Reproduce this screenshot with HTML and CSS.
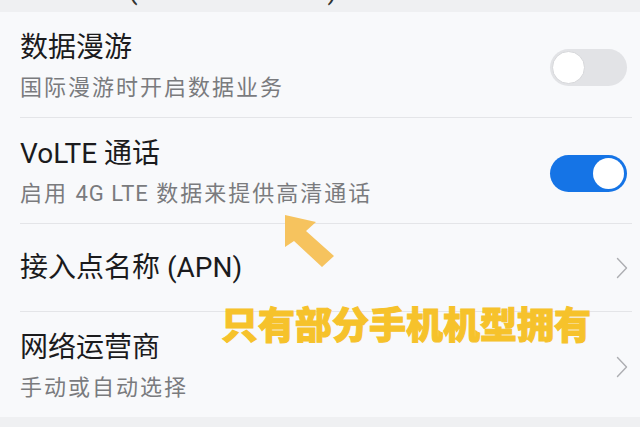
FILE: index.html
```html
<!DOCTYPE html>
<html lang="zh-CN">
<head>
<meta charset="utf-8">
<title>移动网络设置</title>
<link rel="stylesheet" href="styles.css">
</head>
<body>
<div class="screen">
  <div class="top-band">
    <span class="paren paren-l">(</span><span class="paren paren-r">)</span>
  </div>
  <div class="card">
    <div class="row row-two">
      <div class="texts">
        <div class="title">数据漫游</div>
        <div class="sub">国际漫游时开启数据业务</div>
      </div>
      <div class="switch switch-off"><span class="knob"></span></div>
    </div>
    <div class="row row-two">
      <div class="texts">
        <div class="title">VoLTE 通话</div>
        <div class="sub">启用 <span class="latin">4G LTE</span> 数据来提供高清通话</div>
      </div>
      <div class="switch switch-on"><span class="knob"></span></div>
    </div>
    <div class="row row-one">
      <div class="texts">
        <div class="title">接入点名称 (APN)</div>
      </div>
      <svg class="chevron" width="12" height="22" viewBox="0 0 12 22"><path d="M1.5 1.5 L10.5 11 L1.5 20.5" fill="none" stroke="#adaeb2" stroke-width="1.4" stroke-linecap="round" stroke-linejoin="round"/></svg>
    </div>
    <div class="row row-two row-last">
      <div class="texts">
        <div class="title">网络运营商</div>
        <div class="sub">手动或自动选择</div>
      </div>
      <svg class="chevron" width="12" height="22" viewBox="0 0 12 22"><path d="M1.5 1.5 L10.5 11 L1.5 20.5" fill="none" stroke="#adaeb2" stroke-width="1.4" stroke-linecap="round" stroke-linejoin="round"/></svg>
    </div>
  </div>
  <svg class="arrow" width="640" height="427" viewBox="0 0 640 427">
    <polygon points="285,215 316,222 306,231 334,256 322,267 294,241 285,247" fill="#f6c35e"/>
  </svg>
  <div class="callout">只有部分手机机型拥有</div>
</div>
</body>
</html>
```

FILE: styles.css
```css
html, body {
  margin: 0;
  padding: 0;
}
body {
  background: #eff0f2;
  font-family: Roboto, "Noto Sans CJK SC", sans-serif;
}
.screen {
  position: relative;
  width: 640px;
  height: 427px;
  overflow: hidden;
  background: #eff0f2;
}
.top-band {
  height: 12px;
  overflow: hidden;
  background: #eff0f2;
  display: flex;
}
.paren {
  font-size: 28px;
  line-height: 28px;
  margin-top: -24px;
  color: #333;
}
.paren-l {
  margin-left: 128px;
}
.paren-r {
  margin-left: 190px;
}
.card {
  background: #f8f9fb;
  height: 405px;
}
.row {
  display: flex;
  align-items: center;
  margin: 0 8px 0 20px;
  padding-right: 5px;
  border-bottom: 1px solid #e4e5e8;
}
.row-two {
  padding-top: 18px;
  padding-bottom: 13px;
}
.row-one {
  padding-top: 26px;
  padding-bottom: 25px;
}
.row-last {
  border-bottom: none;
}
.texts {
  flex: 1;
}
.title {
  font-size: 28px;
  line-height: 36px;
  color: #1b1b1d;
}
.sub {
  font-size: 22px;
  line-height: 32px;
  margin-top: 6px;
  letter-spacing: 2px;
  color: #7a7b7e;
}
.latin {
  letter-spacing: 1px;
}
.switch {
  width: 77px;
  height: 37px;
  border-radius: 19px;
  box-sizing: border-box;
  display: flex;
  align-items: center;
  padding: 2px;
}
.switch-off {
  background: #e2e3e6;
  justify-content: flex-start;
}
.switch-on {
  background: #1574e6;
  justify-content: flex-end;
  padding: 3px;
}
.knob {
  width: 33px;
  height: 33px;
  border-radius: 50%;
  background: #ffffff;
  box-sizing: border-box;
}
.switch-off .knob {
  border: 1px solid #d6d7da;
}
.switch-on .knob {
  width: 31px;
  height: 31px;
}
.chevron {
  display: block;
  margin-right: -1px;
}
.arrow {
  position: absolute;
  left: 0;
  top: 0;
  pointer-events: none;
}
.callout {
  position: absolute;
  left: 221px;
  top: 301px;
  font-family: "Noto Sans CJK SC", sans-serif;
  font-weight: 900;
  font-size: 37px;
  line-height: 44px;
  color: #f6c22b;
  -webkit-text-stroke: 1px #f6c22b;
  white-space: nowrap;
}
```
